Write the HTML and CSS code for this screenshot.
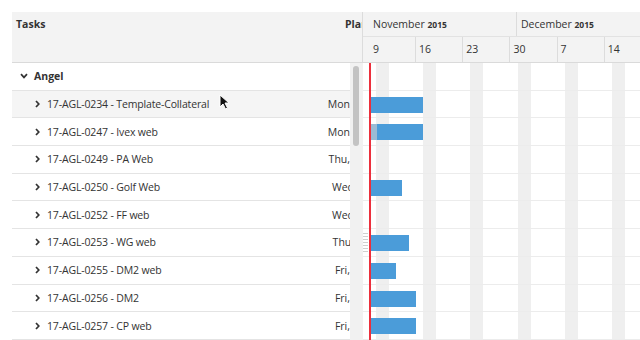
FILE: index.html
```html
<!DOCTYPE html>
<html lang="en">
<head>
<meta charset="UTF-8">
<title>Gantt</title>
<link rel="stylesheet" href="styles.css">
</head>
<body>
  <div class="gantt">
    <!-- Task grid -->
    <div class="left">
      <div class="left-head">
        <div class="col-task">Tasks</div>
        <div class="col-plan">Planned Start</div>
      </div>
      <div class="left-body">
        <div class="rows">
          <div class="row group">
            <svg class="chev-down" width="8" height="6" viewBox="0 0 8 6"><path d="M1 1.2 L4 4.4 L7 1.2" fill="none" stroke="#333" stroke-width="1.7"/></svg>
            Angel
          </div>
          <div class="row task hover">
            <svg class="chev" width="5" height="8" viewBox="0 0 5 8"><path d="M1 1 L3.8 4 L1 7" fill="none" stroke="#333" stroke-width="1.7"/></svg>
            <span class="name">17-AGL-0234 - Template-Collateral</span>
            <span class="plan"><span>Mon</span></span>
            <svg class="cursor" width="11" height="16" viewBox="0 0 11 16"><path d="M1 1 L1 13 L4 10 L6.5 15 L8.5 14 L6 9 L10 9 Z" fill="#111" stroke="#fff" stroke-width="1"/></svg>
          </div>
          <div class="row task">
            <svg class="chev" width="5" height="8" viewBox="0 0 5 8"><path d="M1 1 L3.8 4 L1 7" fill="none" stroke="#333" stroke-width="1.7"/></svg>
            <span class="name">17-AGL-0247 - Ivex web</span>
            <span class="plan"><span>Mon</span></span>
          </div>
          <div class="row task">
            <svg class="chev" width="5" height="8" viewBox="0 0 5 8"><path d="M1 1 L3.8 4 L1 7" fill="none" stroke="#333" stroke-width="1.7"/></svg>
            <span class="name">17-AGL-0249 - PA Web</span>
            <span class="plan"><span>Thu,</span></span>
          </div>
          <div class="row task">
            <svg class="chev" width="5" height="8" viewBox="0 0 5 8"><path d="M1 1 L3.8 4 L1 7" fill="none" stroke="#333" stroke-width="1.7"/></svg>
            <span class="name">17-AGL-0250 - Golf Web</span>
            <span class="plan"><span class="cut">Wed</span></span>
          </div>
          <div class="row task">
            <svg class="chev" width="5" height="8" viewBox="0 0 5 8"><path d="M1 1 L3.8 4 L1 7" fill="none" stroke="#333" stroke-width="1.7"/></svg>
            <span class="name">17-AGL-0252 - FF web</span>
            <span class="plan"><span class="cut">Wed</span></span>
          </div>
          <div class="row task">
            <svg class="chev" width="5" height="8" viewBox="0 0 5 8"><path d="M1 1 L3.8 4 L1 7" fill="none" stroke="#333" stroke-width="1.7"/></svg>
            <span class="name">17-AGL-0253 - WG web</span>
            <span class="plan"><span class="cut">Thu,</span></span>
          </div>
          <div class="row task">
            <svg class="chev" width="5" height="8" viewBox="0 0 5 8"><path d="M1 1 L3.8 4 L1 7" fill="none" stroke="#333" stroke-width="1.7"/></svg>
            <span class="name">17-AGL-0255 - DM2 web</span>
            <span class="plan"><span>Fri,</span></span>
          </div>
          <div class="row task">
            <svg class="chev" width="5" height="8" viewBox="0 0 5 8"><path d="M1 1 L3.8 4 L1 7" fill="none" stroke="#333" stroke-width="1.7"/></svg>
            <span class="name">17-AGL-0256 - DM2</span>
            <span class="plan"><span>Fri,</span></span>
          </div>
          <div class="row task">
            <svg class="chev" width="5" height="8" viewBox="0 0 5 8"><path d="M1 1 L3.8 4 L1 7" fill="none" stroke="#333" stroke-width="1.7"/></svg>
            <span class="name">17-AGL-0257 - CP web</span>
            <span class="plan"><span>Fri,</span></span>
          </div>
        </div>
        <div class="scroll"><div class="thumb"></div></div>
      </div>
    </div>

    <!-- Timeline -->
    <div class="timeline">
      <div class="months">
        <div class="month nov">November <b>2015</b></div>
        <div class="month dec">December <b>2015</b></div>
      </div>
      <div class="weeks">
        <div class="week first">9</div>
        <div class="week">16</div>
        <div class="week">23</div>
        <div class="week">30</div>
        <div class="week">7</div>
        <div class="week">14</div>
      </div>
      <div class="tl-body">
        <div class="tl-row"></div>
        <div class="tl-row"><div class="bar" style="width:54px"></div></div>
        <div class="tl-row"><div class="bar part" style="width:54px"></div></div>
        <div class="tl-row"></div>
        <div class="tl-row"><div class="bar" style="width:33px"></div></div>
        <div class="tl-row"></div>
        <div class="tl-row"><div class="bar" style="width:40px"></div></div>
        <div class="tl-row"><div class="bar" style="width:27px"></div></div>
        <div class="tl-row"><div class="bar" style="width:47px"></div></div>
        <div class="tl-row"><div class="bar" style="width:47px"></div></div>
        <div class="grip"></div>
        <div class="today"></div>
      </div>
    </div>
  </div>
</body>
</html>
```

FILE: styles.css
```css
/* Base */
* { box-sizing: border-box; }
body {
  margin: 0;
  font-family: 'Open Sans', sans-serif;
  font-size: 10.5px;
  color: #333;
  background: #fff;
}

.gantt {
  display: flex;
  margin: 12px 0 0 12px;
  height: 328px;
  overflow: hidden;
}

/* Task grid */
.left {
  width: 351px;
  flex: none;
  display: flex;
  flex-direction: column;
}
.left-head {
  height: 51px;
  flex: none;
  display: flex;
  background: #f3f3f3;
  border-bottom: 1px solid #dadada;
}
.col-task {
  flex: 1;
  font-weight: 700;
  padding: 5px 0 0 4px;
}
.col-plan {
  width: 18px;
  font-weight: 700;
  padding-top: 5px;
  white-space: nowrap;
  overflow: hidden;
  border-right: 1px solid #dcdcdc;
}
.left-body {
  flex: 1;
  display: flex;
}
.rows { width: 338px; }
.row {
  position: relative;
  height: 27.7px;
  display: flex;
  align-items: center;
  white-space: nowrap;
  border-bottom: 1px solid #e4e4e4;
}
.row.hover { background: #f5f5f5; }
.row.group {
  font-weight: 700;
  padding-left: 8px;
}
.chev-down { margin-right: 6px; }
.row.task { padding-left: 23px; }
.chev { margin-right: 7px; flex: none; }
.name {
  flex: 1;
  overflow: hidden;
  letter-spacing: -0.15px;
}
.plan {
  width: 26px;
  text-align: right;
  overflow: hidden;
}
.plan span { display: inline-block; }
.plan .cut { margin-right: -4px; }
.cursor {
  position: absolute;
  left: 207px;
  top: 3px;
}

/* Scrollbar */
.scroll {
  width: 13px;
  background: #f1f1f1;
  padding: 3px 0 0 3px;
}
.thumb {
  width: 6px;
  height: 80px;
  border-radius: 3px;
  background: #c3c3c3;
}

/* Timeline */
.timeline {
  flex: 1;
  overflow: hidden;
}
.months {
  height: 25px;
  display: flex;
  background: #f3f3f3;
  border-bottom: 1px solid #e2e2e2;
}
.month {
  flex: none;
  line-height: 24px;
  white-space: nowrap;
}
.month b { font-size: 8.5px; }
.month.nov {
  width: 154px;
  padding-left: 10px;
  border-right: 1px solid #dcdcdc;
}
.month.dec { padding-left: 4px; }
.weeks {
  height: 26px;
  display: flex;
  background: #f3f3f3;
  border-bottom: 1px solid #dadada;
}
.week {
  flex: none;
  width: 47.2px;
  line-height: 25px;
  padding-left: 3px;
  border-right: 1px solid #dcdcdc;
}
.week.first {
  width: 53px;
  padding-left: 10px;
}
.tl-body {
  position: relative;
  height: 100%;
  background: repeating-linear-gradient(90deg, transparent 0 13px, #efefef 13px 26px, transparent 26px 47.2px);
}
.tl-row {
  height: 27.7px;
  padding-top: 6px;
  border-bottom: 1px solid #ececec;
}
.bar {
  height: 16px;
  margin-left: 6px;
  background: #4b9cd9;
}
.bar.part { background: linear-gradient(90deg, #9bbbd4 0 8px, #4b9cd9 8px); }
.grip {
  position: absolute;
  left: 0;
  top: 170px;
  width: 5px;
  height: 20px;
  background: repeating-linear-gradient(180deg, #cfcfcf 0 1px, transparent 1px 3px);
}
.today {
  position: absolute;
  left: 6px;
  top: 0;
  bottom: 0;
  width: 1.5px;
  background: #ec2f3c;
}
```
